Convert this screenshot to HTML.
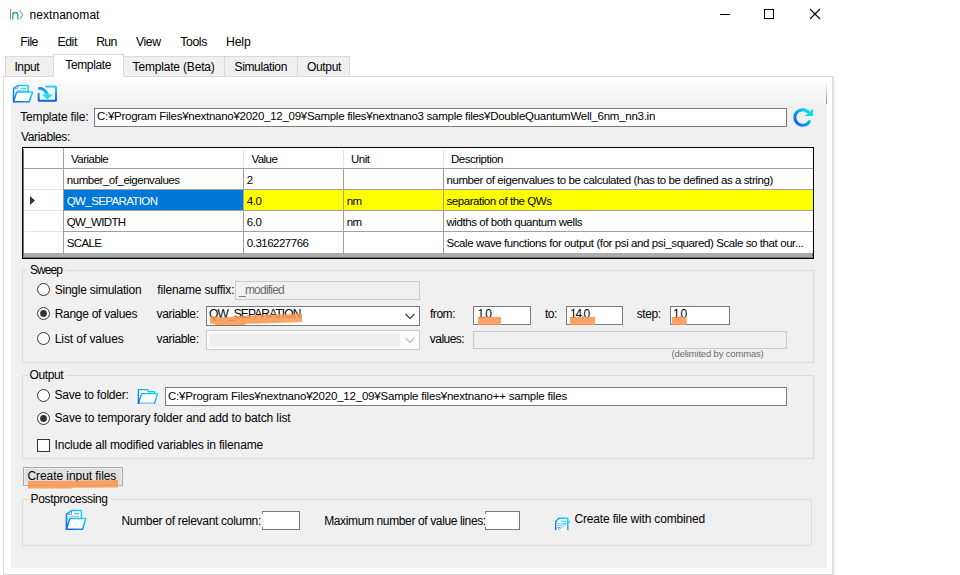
<!DOCTYPE html>
<html><head><meta charset="utf-8"><style>
html,body{margin:0;padding:0;}
body{width:960px;height:575px;overflow:hidden;position:relative;background:#fff;font-family:"Liberation Sans",sans-serif;}
.t{position:absolute;white-space:nowrap;}
.r{position:absolute;}
</style></head><body>
<svg class="r" style="left:0;top:0" width="40" height="30"><line x1="10.5" y1="9" x2="10.5" y2="19.5" stroke="#8a8a8a" stroke-width="1"/>
<path d="M12.8 19.5V12.5M12.8 14.5q1-2 2.6-2q2.4 0 2.4 2.6V19.5" fill="none" stroke="#2aa6b0" stroke-width="1.3"/>
<path d="M19.8 10.2L22.6 14.8L19.8 19.4" fill="none" stroke="#8a8a8a" stroke-width="1"/></svg>
<div class="t" style="left:29.50px;top:8.84px;font-size:12px;line-height:12px;letter-spacing:0.056px;color:#000;">nextnanomat</div>
<svg class="r" style="left:700px;top:0" width="130" height="30">
<line x1="20" y1="14.5" x2="30" y2="14.5" stroke="#000" stroke-width="1"/>
<rect x="64.5" y="9.5" width="9" height="9" fill="none" stroke="#000" stroke-width="1"/>
<path d="M110 9L120 19M120 9L110 19" stroke="#000" stroke-width="1.1"/></svg>
<div class="t" style="left:20.30px;top:35.59px;font-size:12.3px;line-height:12.3px;letter-spacing:-0.555px;color:#000;">File</div>
<div class="t" style="left:57.40px;top:35.59px;font-size:12.3px;line-height:12.3px;letter-spacing:-0.424px;color:#000;">Edit</div>
<div class="t" style="left:96.20px;top:35.59px;font-size:12.3px;line-height:12.3px;letter-spacing:-0.755px;color:#000;">Run</div>
<div class="t" style="left:136.00px;top:35.59px;font-size:12.3px;line-height:12.3px;letter-spacing:-0.435px;color:#000;">View</div>
<div class="t" style="left:180.20px;top:35.59px;font-size:12.3px;line-height:12.3px;letter-spacing:-0.383px;color:#000;">Tools</div>
<div class="t" style="left:226.00px;top:35.59px;font-size:12.3px;line-height:12.3px;letter-spacing:-0.174px;color:#000;">Help</div>
<div class="r" style="left:5px;top:56px;width:48px;height:20px;background:#f0f0f0;border:1px solid #d9d9d9;border-bottom:none;box-sizing:border-box;width:49px"></div>
<div class="r" style="left:123px;top:56px;width:102px;height:20px;background:#f0f0f0;border:1px solid #d9d9d9;border-bottom:none;border-left:none;box-sizing:border-box"></div>
<div class="r" style="left:224px;top:56px;width:74px;height:20px;background:#f0f0f0;border:1px solid #d9d9d9;border-bottom:none;box-sizing:border-box"></div>
<div class="r" style="left:297px;top:56px;width:53px;height:20px;background:#f0f0f0;border:1px solid #d9d9d9;border-bottom:none;box-sizing:border-box"></div>
<div class="r" style="left:3px;top:76px;width:830px;height:499px;background:#fff;border:1px solid #d9d9d9;box-sizing:border-box"></div>
<div class="r" style="left:833px;top:77px;width:2px;height:498px;background:linear-gradient(90deg,#e6e6e6,#f3f3f3)"></div>
<div class="r" style="left:53px;top:54px;width:71px;height:23px;background:#fff;border:1px solid #d9d9d9;border-bottom:none;box-sizing:border-box"></div>
<div class="t" style="left:14.40px;top:60.84px;font-size:12px;line-height:12px;letter-spacing:-0.378px;color:#000;">Input</div>
<div class="t" style="left:65.30px;top:59.04px;font-size:12px;line-height:12px;letter-spacing:-0.374px;color:#000;">Template</div>
<div class="t" style="left:132.60px;top:60.84px;font-size:12px;line-height:12px;letter-spacing:-0.180px;color:#000;">Template (Beta)</div>
<div class="t" style="left:234.50px;top:60.84px;font-size:12px;line-height:12px;letter-spacing:-0.353px;color:#000;">Simulation</div>
<div class="t" style="left:307.00px;top:60.84px;font-size:12px;line-height:12px;letter-spacing:-0.337px;color:#000;">Output</div>
<div class="r" style="left:11px;top:82px;width:816px;height:486px;background:#f0f0f0"></div>
<div class="r" style="left:11px;top:82px;width:816px;height:23px;background:linear-gradient(#fcfcfc,#f1f1f1)"></div>
<div class="r" style="left:826px;top:82px;width:1px;height:22px;background:linear-gradient(#fafafa,#d0d0d0 40%,#8a8a8a)"></div>
<div class="t" style="left:20.30px;top:110.84px;font-size:12px;line-height:12px;letter-spacing:-0.193px;color:#000;">Template file:</div>
<div class="r" style="left:94px;top:108px;width:693px;height:19px;background:#fff;border:1px solid #7a7a7a;box-sizing:border-box"></div>
<div class="t" style="left:97.00px;top:111.46px;font-size:11.5px;line-height:11.5px;letter-spacing:-0.271px;color:#000;">C:¥Program Files¥nextnano¥2020_12_09¥Sample files¥nextnano3 sample files¥DoubleQuantumWell_6nm_nn3.in</div>
<svg class="r" style="left:792px;top:106.7px" width="22" height="22" viewBox="0 0 22 22">
<defs><linearGradient id="rg" x1="0" y1="1" x2="1" y2="0"><stop offset="0" stop-color="#0a5ff0"/><stop offset="1" stop-color="#00e4f0"/></linearGradient></defs>
<path d="M17.3 14.6A7.8 7.8 0 1 1 16.8 5.6" fill="none" stroke="url(#rg)" stroke-width="3" stroke-linecap="round"/>
<path d="M20.8 1.8V8.9H13.2Z" fill="#00dcf0"/>
</svg>
<div class="t" style="left:21.00px;top:130.84px;font-size:12px;line-height:12px;letter-spacing:-0.347px;color:#000;">Variables:</div>
<div class="r" style="left:22px;top:147px;width:792px;height:112px;background:#ababab;border:1px solid #000;box-sizing:border-box;box-shadow:inset 0 0 0 1px rgba(0,0,0,0.3)"></div>
<div class="r" style="left:24px;top:149px;width:789px;height:104px;background:#fff"></div>
<div class="r" style="left:23px;top:148px;width:790px;height:1px;background:#fff"></div>
<div class="r" style="left:24px;top:168px;width:789px;height:1px;background:#a0a0a0"></div>
<div class="r" style="left:63px;top:150px;width:1px;height:17px;background:#e3e3e3"></div>
<div class="r" style="left:63px;top:169px;width:1px;height:84px;background:#a0a0a0"></div>
<div class="r" style="left:243px;top:150px;width:1px;height:17px;background:#e3e3e3"></div>
<div class="r" style="left:243px;top:169px;width:1px;height:84px;background:#a0a0a0"></div>
<div class="r" style="left:343px;top:150px;width:1px;height:17px;background:#e3e3e3"></div>
<div class="r" style="left:343px;top:169px;width:1px;height:84px;background:#a0a0a0"></div>
<div class="r" style="left:443px;top:150px;width:1px;height:17px;background:#e3e3e3"></div>
<div class="r" style="left:443px;top:169px;width:1px;height:84px;background:#a0a0a0"></div>
<div class="r" style="left:63px;top:148px;width:1px;height:20px;background:#a0a0a0"></div>
<div class="r" style="left:25px;top:189px;width:38px;height:1px;background:#e3e3e3"></div>
<div class="r" style="left:64px;top:189px;width:749px;height:1px;background:#a0a0a0"></div>
<div class="r" style="left:25px;top:210px;width:38px;height:1px;background:#e3e3e3"></div>
<div class="r" style="left:64px;top:210px;width:749px;height:1px;background:#a0a0a0"></div>
<div class="r" style="left:25px;top:231px;width:38px;height:1px;background:#e3e3e3"></div>
<div class="r" style="left:64px;top:231px;width:749px;height:1px;background:#a0a0a0"></div>
<div class="r" style="left:64px;top:190px;width:179px;height:20px;background:#0078d7"></div>
<div class="r" style="left:244px;top:190px;width:99px;height:20px;background:#ffff00"></div>
<div class="r" style="left:344px;top:190px;width:99px;height:20px;background:#ffff00"></div>
<div class="r" style="left:444px;top:190px;width:369px;height:20px;background:#ffff00"></div>
<svg class="r" style="left:28px;top:195px" width="10" height="12"><path d="M2 1L7 5.5L2 10Z" fill="#333"/></svg>
<div class="t" style="left:71.00px;top:154.06px;font-size:11.5px;line-height:11.5px;letter-spacing:-0.518px;color:#000;">Variable</div>
<div class="t" style="left:251.60px;top:154.06px;font-size:11.5px;line-height:11.5px;letter-spacing:-0.592px;color:#000;">Value</div>
<div class="t" style="left:351.00px;top:154.06px;font-size:11.5px;line-height:11.5px;letter-spacing:-0.488px;color:#000;">Unit</div>
<div class="t" style="left:451.00px;top:154.06px;font-size:11.5px;line-height:11.5px;letter-spacing:-0.502px;color:#000;">Description</div>
<div class="t" style="left:66.80px;top:175.26px;font-size:11.5px;line-height:11.5px;letter-spacing:-0.479px;color:#000;">number_of_eigenvalues</div>
<div class="t" style="left:246.80px;top:175.26px;font-size:11.5px;line-height:11.5px;letter-spacing:-0.524px;color:#000;">2</div>
<div class="t" style="left:346.80px;top:175.26px;font-size:11.5px;line-height:11.5px;letter-spacing:0.000px;color:#000;"></div>
<div class="t" style="left:446.50px;top:175.26px;font-size:11.5px;line-height:11.5px;letter-spacing:-0.416px;color:#000;">number of eigenvalues to be calculated (has to be defined as a string)</div>
<div class="t" style="left:66.80px;top:196.26px;font-size:11.5px;line-height:11.5px;letter-spacing:-0.622px;color:#fff;">QW_SEPARATION</div>
<div class="t" style="left:246.80px;top:196.26px;font-size:11.5px;line-height:11.5px;letter-spacing:-0.437px;color:#000;">4.0</div>
<div class="t" style="left:346.80px;top:196.26px;font-size:11.5px;line-height:11.5px;letter-spacing:-0.655px;color:#000;">nm</div>
<div class="t" style="left:446.50px;top:196.26px;font-size:11.5px;line-height:11.5px;letter-spacing:-0.447px;color:#000;">separation of the QWs</div>
<div class="t" style="left:66.80px;top:217.26px;font-size:11.5px;line-height:11.5px;letter-spacing:-0.655px;color:#000;">QW_WIDTH</div>
<div class="t" style="left:246.80px;top:217.26px;font-size:11.5px;line-height:11.5px;letter-spacing:-0.437px;color:#000;">6.0</div>
<div class="t" style="left:346.80px;top:217.26px;font-size:11.5px;line-height:11.5px;letter-spacing:-0.655px;color:#000;">nm</div>
<div class="t" style="left:446.50px;top:217.26px;font-size:11.5px;line-height:11.5px;letter-spacing:-0.432px;color:#000;">widths of both quantum wells</div>
<div class="t" style="left:66.80px;top:238.26px;font-size:11.5px;line-height:11.5px;letter-spacing:-0.619px;color:#000;">SCALE</div>
<div class="t" style="left:246.80px;top:238.26px;font-size:11.5px;line-height:11.5px;letter-spacing:-0.501px;color:#000;">0.316227766</div>
<div class="t" style="left:346.80px;top:238.26px;font-size:11.5px;line-height:11.5px;letter-spacing:0.000px;color:#000;"></div>
<div class="t" style="left:446.50px;top:238.26px;font-size:11.5px;line-height:11.5px;letter-spacing:-0.409px;color:#000;">Scale wave functions for output (for psi and psi_squared) Scale so that our...</div>
<div class="r" style="left:22px;top:270px;width:792px;height:93px;border:1px solid #dcdcdc;box-sizing:border-box"></div>
<div class="r" style="left:28px;top:269px;width:37px;height:3px;background:#f0f0f0"></div>
<div class="t" style="left:30.00px;top:263.84px;font-size:12px;line-height:12px;letter-spacing:-0.939px;color:#000;">Sweep</div>
<svg class="r" style="left:36.0px;top:282.0px" width="15" height="15"><circle cx="7.5" cy="7.5" r="6" fill="#fff" stroke="#333" stroke-width="1"/></svg>
<svg class="r" style="left:36.0px;top:306.0px" width="15" height="15"><circle cx="7.5" cy="7.5" r="6" fill="#fff" stroke="#333" stroke-width="1"/><circle cx="7.5" cy="7.5" r="3.4" fill="#333"/></svg>
<svg class="r" style="left:36.0px;top:331.0px" width="15" height="15"><circle cx="7.5" cy="7.5" r="6" fill="#fff" stroke="#333" stroke-width="1"/></svg>
<div class="t" style="left:54.70px;top:283.84px;font-size:12px;line-height:12px;letter-spacing:-0.236px;color:#000;">Single simulation</div>
<div class="t" style="left:54.70px;top:308.34px;font-size:12px;line-height:12px;letter-spacing:-0.282px;color:#000;">Range of values</div>
<div class="t" style="left:54.70px;top:332.84px;font-size:12px;line-height:12px;letter-spacing:-0.074px;color:#000;">List of values</div>
<div class="t" style="left:157.30px;top:283.84px;font-size:12px;line-height:12px;letter-spacing:-0.176px;color:#000;">filename suffix:</div>
<div class="r" style="left:235px;top:281px;width:185px;height:19px;background:#f0f0f0;border:1px solid #cccccc;box-sizing:border-box"></div>
<div class="t" style="left:239.00px;top:283.84px;font-size:12px;line-height:12px;letter-spacing:-0.781px;color:#6d6d6d;">_modified</div>
<div class="t" style="left:156.60px;top:308.34px;font-size:12px;line-height:12px;letter-spacing:-0.373px;color:#000;">variable:</div>
<div class="t" style="left:156.60px;top:332.84px;font-size:12px;line-height:12px;letter-spacing:-0.373px;color:#000;">variable:</div>
<div class="r" style="left:206px;top:306px;width:214px;height:20px;background:#fff;border:1px solid #7a7a7a;box-sizing:border-box"></div>
<div class="t" style="left:209.00px;top:308.34px;font-size:12px;line-height:12px;letter-spacing:-0.870px;color:#000;">QW_SEPARATION</div>
<svg class="r" style="left:404px;top:311px" width="12" height="10"><path d="M1.5 3L6 7.5L10.5 3" fill="none" stroke="#333" stroke-width="1.1"/></svg>
<div class="r" style="left:206px;top:330px;width:214px;height:20px;background:#fbfbfb;border:1px solid #cccccc;box-sizing:border-box"></div>
<div class="r" style="left:209px;top:333px;width:191px;height:14px;background:#efefef"></div>
<svg class="r" style="left:404px;top:335px" width="12" height="10"><path d="M1.5 3L6 7.5L10.5 3" fill="none" stroke="#bbb" stroke-width="1.1"/></svg>
<div class="t" style="left:430.00px;top:308.34px;font-size:12px;line-height:12px;letter-spacing:-0.467px;color:#000;">from:</div>
<div class="t" style="left:545.00px;top:308.34px;font-size:12px;line-height:12px;letter-spacing:-0.547px;color:#000;">to:</div>
<div class="t" style="left:636.70px;top:308.34px;font-size:12px;line-height:12px;letter-spacing:-0.403px;color:#000;">step:</div>
<div class="r" style="left:473px;top:306px;width:58px;height:19px;background:#fff;border:1px solid #7a7a7a;box-sizing:border-box"></div>
<div class="r" style="left:566px;top:306px;width:57px;height:19px;background:#fff;border:1px solid #7a7a7a;box-sizing:border-box"></div>
<div class="r" style="left:670px;top:306px;width:60px;height:19px;background:#fff;border:1px solid #7a7a7a;box-sizing:border-box"></div>
<div class="t" style="left:477.60px;top:308.34px;font-size:12px;line-height:12px;letter-spacing:-1.227px;color:#000;">1.0</div>
<div class="t" style="left:570.00px;top:308.34px;font-size:12px;line-height:12px;letter-spacing:-1.089px;color:#000;">14.0</div>
<div class="t" style="left:673.00px;top:308.34px;font-size:12px;line-height:12px;letter-spacing:-1.227px;color:#000;">1.0</div>
<div class="t" style="left:429.80px;top:332.84px;font-size:12px;line-height:12px;letter-spacing:-0.546px;color:#000;">values:</div>
<div class="r" style="left:473px;top:331px;width:314px;height:18px;background:#f0f0f0;border:1px solid #cccccc;box-sizing:border-box"></div>
<div class="t" style="left:671.60px;top:348.96px;font-size:9.5px;line-height:9.5px;letter-spacing:-0.169px;color:#6d6d6d;">(delimited by commas)</div>
<svg class="r" style="left:0;top:0" width="960" height="575"><g fill="#f99650" fill-opacity="0.88"><polygon points="210,316 222,317.2 265,314.7 302,313.8 302,322 250,323.8 245,323.8 245,325 215,325 215,323.8 210,323.8"/><rect x="478" y="317" width="23" height="8"/><rect x="570" y="317" width="25" height="8"/><rect x="671.7" y="317" width="15" height="8"/></g></svg>
<div class="r" style="left:22px;top:375px;width:792px;height:84px;border:1px solid #dcdcdc;box-sizing:border-box"></div>
<div class="r" style="left:27.5px;top:374px;width:38.7px;height:3px;background:#f0f0f0"></div>
<div class="t" style="left:29.50px;top:369.14px;font-size:12px;line-height:12px;letter-spacing:-0.387px;color:#000;">Output</div>
<svg class="r" style="left:36.0px;top:387.5px" width="15" height="15"><circle cx="7.5" cy="7.5" r="6" fill="#fff" stroke="#333" stroke-width="1"/></svg>
<svg class="r" style="left:36.0px;top:410.5px" width="15" height="15"><circle cx="7.5" cy="7.5" r="6" fill="#fff" stroke="#333" stroke-width="1"/><circle cx="7.5" cy="7.5" r="3.4" fill="#333"/></svg>
<div class="t" style="left:54.50px;top:389.34px;font-size:12px;line-height:12px;letter-spacing:-0.212px;color:#000;">Save to folder:</div>
<div class="t" style="left:54.50px;top:412.34px;font-size:12px;line-height:12px;letter-spacing:-0.134px;color:#000;">Save to temporary folder and add to batch list</div>
<div class="r" style="left:165px;top:387px;width:622px;height:19px;background:#fff;border:1px solid #7a7a7a;box-sizing:border-box"></div>
<div class="t" style="left:168.00px;top:390.66px;font-size:11.5px;line-height:11.5px;letter-spacing:-0.201px;color:#000;">C:¥Program Files¥nextnano¥2020_12_09¥Sample files¥nextnano++ sample files</div>
<div class="r" style="left:37px;top:439px;width:13px;height:13px;background:#fff;border:1px solid #333;box-sizing:border-box"></div>
<div class="t" style="left:54.50px;top:438.84px;font-size:12px;line-height:12px;letter-spacing:-0.166px;color:#000;">Include all modified variables in filename</div>
<div class="r" style="left:23px;top:467px;width:100px;height:19px;background:#e1e1e1;border:1px solid #adadad;box-sizing:border-box;box-shadow:inset 0 0 0 1px #ebebeb"></div>
<div class="t" style="left:27.50px;top:470.14px;font-size:12px;line-height:12px;letter-spacing:-0.072px;color:#000;">Create input files</div>
<svg class="r" style="left:0;top:0" width="960" height="575"><polygon fill="#f99650" fill-opacity="0.88" points="28,481 71,480.8 118,480 118,487.5 71,487.8 71,488.5 28,488.5"/></svg>
<div class="r" style="left:22px;top:499px;width:790px;height:47px;border:1px solid #dcdcdc;box-sizing:border-box"></div>
<div class="r" style="left:28.6px;top:498px;width:82px;height:3px;background:#f0f0f0"></div>
<div class="t" style="left:30.60px;top:492.84px;font-size:12px;line-height:12px;letter-spacing:-0.360px;color:#000;">Postprocessing</div>
<div class="t" style="left:121.40px;top:514.84px;font-size:12px;line-height:12px;letter-spacing:-0.300px;color:#000;">Number of relevant column:</div>
<div class="r" style="left:262px;top:511px;width:38px;height:19px;background:#fff;border:1px solid #7a7a7a;box-sizing:border-box"></div>
<div class="r" style="left:262px;top:514px;width:2px;height:13px;background:#f0f0f0"></div>
<div class="t" style="left:324.20px;top:514.84px;font-size:12px;line-height:12px;letter-spacing:-0.371px;color:#000;">Maximum number of value lines:</div>
<div class="r" style="left:485px;top:511px;width:35px;height:19px;background:#fff;border:1px solid #7a7a7a;box-sizing:border-box"></div>
<div class="r" style="left:485px;top:514px;width:2px;height:13px;background:#f0f0f0"></div>
<div class="t" style="left:574.50px;top:512.84px;font-size:12px;line-height:12px;letter-spacing:-0.169px;color:#000;">Create file with combined</div>
<svg class="r" style="left:0;top:0" width="960" height="575">
<defs>
<linearGradient id="gbc" x1="0" y1="1" x2="1" y2="0"><stop offset="0" stop-color="#0f62f0"/><stop offset="1" stop-color="#14def0"/></linearGradient>
<linearGradient id="gtb" x1="0" y1="0" x2="0" y2="1"><stop offset="0" stop-color="#18d8f0"/><stop offset="1" stop-color="#0a5ef0"/></linearGradient>
<linearGradient id="garr" x1="0" y1="0" x2="1" y2="1"><stop offset="0" stop-color="#2a7af0"/><stop offset="1" stop-color="#12d6f0"/></linearGradient>
</defs>
<!-- toolbar folder -->
<path d="M13.6 102V88.4L17.8 85.5H28.2V92" fill="#fff" stroke="url(#gbc)" stroke-width="1.5" stroke-linejoin="round"/>
<path d="M17.8 85.5V88.4H13.6" fill="none" stroke="#5aa8f0" stroke-width="1"/>
<path d="M21 88.4H26.3" stroke="#2ccff0" stroke-width="1.2"/>
<path d="M17 90.4H26.3" stroke="#8cc4f4" stroke-width="1.2"/>
<path d="M13.6 101.8L16.6 92.1H32.6L29.2 101.8Z" fill="#fff" stroke="url(#gbc)" stroke-width="1.5" stroke-linejoin="round"/>
<!-- import icon -->
<path d="M45.4 86.4H55Q56 86.4 56 87.4V99.9Q56 100.8 55 100.8H39.7Q38.7 100.8 38.7 99.9V92.9" fill="none" stroke="url(#gtb)" stroke-width="2"/>
<path d="M37.7 87.5Q44.8 85.2 49.4 94.6L45.5 94.6Q43.4 89.6 38.2 89.5Z" fill="url(#garr)"/>
<path d="M41.9 94.4H52.9L47.4 99.6Z" fill="#10dff0"/>
<!-- output folder -->
<path d="M138.4 403.4V389.6H147.2L148.6 391.8H154.6V393.6" fill="#fff" stroke="url(#gbc)" stroke-width="1.4" stroke-linejoin="round"/>
<path d="M138.4 403.4L141.7 393.6H157.6L154.5 403.4Z" fill="#fff" stroke="url(#gbc)" stroke-width="1.4" stroke-linejoin="round"/>
<path d="M139.5 403.4H154" stroke="#8ad0f6" stroke-width="1.2"/>
<!-- postprocessing folder -->
<path d="M66.4 529.3V514.4L71.5 510.6H81.4V518.4" fill="#fff" stroke="url(#gbc)" stroke-width="1.5" stroke-linejoin="round"/>
<path d="M71.5 510.6V514.4H66.4" fill="none" stroke="#5aa8f0" stroke-width="1"/>
<path d="M67.8 515.5V527" stroke="#6aa8f0" stroke-width="0.9"/>
<path d="M74 513.6H79.2" stroke="#2ccff0" stroke-width="1.3"/>
<path d="M70.2 516.3H79.2" stroke="#8cc4f4" stroke-width="1.3"/>
<path d="M66.4 529.2L69.9 518.5H85.8L82.6 529.2Z" fill="#fff" stroke="url(#gbc)" stroke-width="1.5" stroke-linejoin="round"/>
<!-- create file icon -->
<path d="M555.7 530V521.8L558.8 518.3H567.8V530" fill="#fff" stroke="url(#gbc)" stroke-width="1.4" stroke-linejoin="round"/>
<path d="M561 521.3H566" stroke="#30d4f0" stroke-width="1.1"/>
<path d="M557.3 523.7H566" stroke="#90d2f4" stroke-width="1.4"/>
<path d="M557.3 525.7H561" stroke="#70b8f0" stroke-width="1"/>
<path d="M557.3 527.5H560" stroke="#5aa0f0" stroke-width="1"/>
<path d="M558.4 529.4L569.2 521.4" stroke="#38b8f0" stroke-width="2.2" stroke-opacity="0.75" stroke-dasharray="1.2 0.7"/>
<circle cx="569" cy="521.8" r="1.3" fill="#40d8f0" fill-opacity="0.8"/>
</svg>
</body></html>
